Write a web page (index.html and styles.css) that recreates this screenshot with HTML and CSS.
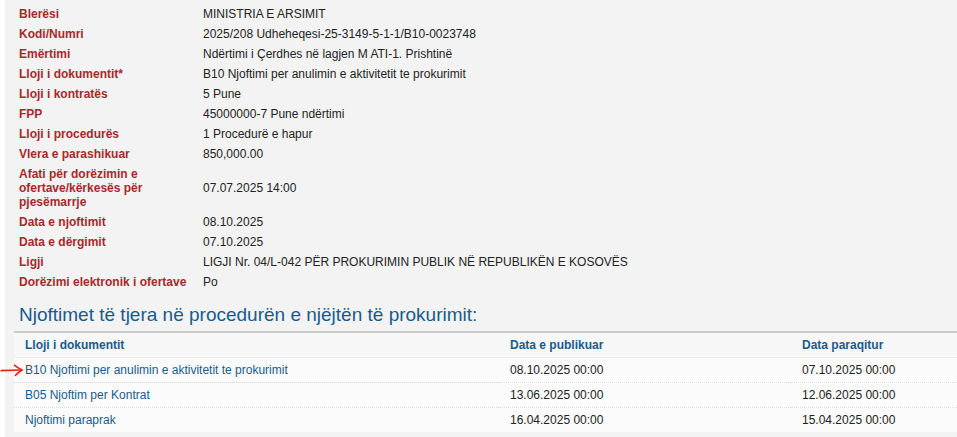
FILE: index.html
```html
<!DOCTYPE html>
<html lang="sq">

<head>
    <meta charset="UTF-8">
    <meta name="viewport" content="width=device-width, initial-scale=1.0">
    <title>Njoftimi</title>
    <link rel="stylesheet" href="styles.css">
</head>

<body>
    <div class="page">
        <table class="info">
            <tr><td class="label">Blerësi</td><td>MINISTRIA E ARSIMIT</td></tr>
            <tr><td class="label">Kodi/Numri</td><td>2025/208 Udheheqesi-25-3149-5-1-1/B10-0023748</td></tr>
            <tr><td class="label">Emërtimi</td><td>Ndërtimi i Çerdhes në lagjen M ATI-1. Prishtinë</td></tr>
            <tr><td class="label">Lloji i dokumentit*</td><td>B10 Njoftimi per anulimin e aktivitetit te prokurimit</td></tr>
            <tr><td class="label">Lloji i kontratës</td><td>5 Pune</td></tr>
            <tr><td class="label">FPP</td><td>45000000-7 Pune ndërtimi</td></tr>
            <tr><td class="label">Lloji i procedurës</td><td>1 Procedurë e hapur</td></tr>
            <tr><td class="label">Vlera e parashikuar</td><td>850,000.00</td></tr>
            <tr><td class="label"><span class="wrap">Afati për dorëzimin e ofertave/kërkesës për pjesëmarrje</span></td><td>07.07.2025 14:00</td></tr>
            <tr><td class="label">Data e njoftimit</td><td>08.10.2025</td></tr>
            <tr><td class="label">Data e dërgimit</td><td>07.10.2025</td></tr>
            <tr><td class="label">Ligji</td><td>LIGJI Nr. 04/L-042 PËR PROKURIMIN PUBLIK NË REPUBLIKËN E KOSOVËS</td></tr>
            <tr><td class="label">Dorëzimi elektronik i ofertave</td><td>Po</td></tr>
        </table>

        <h2>Njoftimet të tjera në procedurën e njëjtën të prokurimit:</h2>

        <table class="notices">
            <thead>
                <tr>
                    <th class="col-type">Lloji i dokumentit</th>
                    <th class="col-pub">Data e publikuar</th>
                    <th>Data paraqitur</th>
                </tr>
            </thead>
            <tbody>
                <tr>
                    <td class="current">
                        <svg class="arrow" width="24" height="14" viewBox="0 0 24 14">
                            <path d="M0.5 7.6 L21 7" stroke="#e8201c" stroke-width="1.6" fill="none"/>
                            <path d="M14 1.8 Q18 5 22 7 Q18 9.5 15 12.8" stroke="#e8201c" stroke-width="1.6" fill="none"/>
                        </svg>
                        <a href="#">B10 Njoftimi per anulimin e aktivitetit te prokurimit</a>
                    </td>
                    <td>08.10.2025 00:00</td>
                    <td>07.10.2025 00:00</td>
                </tr>
                <tr>
                    <td><a href="#">B05 Njoftim per Kontrat</a></td>
                    <td>13.06.2025 00:00</td>
                    <td>12.06.2025 00:00</td>
                </tr>
                <tr>
                    <td><a href="#">Njoftimi paraprak</a></td>
                    <td>16.04.2025 00:00</td>
                    <td>15.04.2025 00:00</td>
                </tr>
            </tbody>
        </table>
    </div>
</body>

</html>
```

FILE: styles.css
```css
body {
    margin: 0;
    background-color: #ffffff;
    font-family: Arial, "Liberation Sans", sans-serif;
    font-size: 12px;
    color: #222222;
}

.page {
    margin-left: 5px;
    height: 437px;
    padding: 4px 0 0 9px;
    box-sizing: border-box;
    background-color: #f3f3f3;
}

.info {
    border-collapse: collapse;
}

.info td {
    padding: 3px 0 3px 5px;
    line-height: 14px;
    vertical-align: middle;
}

.info .label {
    width: 174px;
    padding-right: 5px;
    color: #a8282b;
    font-weight: bold;
    vertical-align: top;
}

.info .wrap {
    display: block;
    max-width: 150px;
}

h2 {
    margin: 12px 0 5px 5px;
    font-size: 19px;
    line-height: 22px;
    font-weight: normal;
    color: #175b8e;
}

.notices {
    width: 100%;
    border-collapse: collapse;
    border-top: 2px solid #cccccc;
}

.notices th,
.notices td {
    text-align: left;
    padding: 0 0 0 11px;
    height: 25px;
    line-height: 14px;
}

.notices th {
    background-color: #f7f7f7;
    color: #175b8e;
    font-weight: bold;
    border-bottom: 1px solid #ececec;
    height: 24px;
}

.notices td {
    background-color: #fbfbfb;
    border-bottom: 1px dotted #dddddd;
    height: 24px;
}

.notices tbody tr:last-child td {
    border-bottom: none;
}

.col-type {
    width: 474px;
}

.col-pub {
    width: 281px;
}

.notices a {
    color: #175b8e;
    text-decoration: none;
}

.current {
    position: relative;
}

.arrow {
    position: absolute;
    left: -14px;
    top: 5px;
}
```
